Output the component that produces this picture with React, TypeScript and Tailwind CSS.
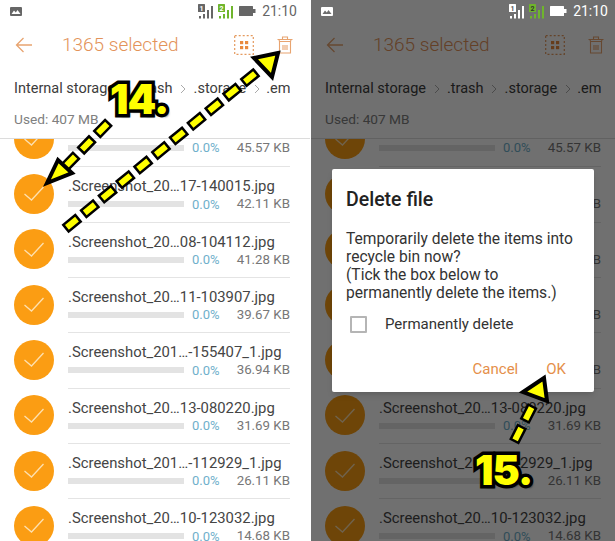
import React from "react";

const rows = [
  { name: ".Screenshot_20…21-150233.jpg", size: "45.57 KB" },
  { name: ".Screenshot_20…17-140015.jpg", size: "42.11 KB" },
  { name: ".Screenshot_20…08-104112.jpg", size: "41.28 KB" },
  { name: ".Screenshot_20…11-103907.jpg", size: "39.67 KB" },
  { name: ".Screenshot_201…-155407_1.jpg", size: "36.94 KB" },
  { name: ".Screenshot_20…13-080220.jpg", size: "31.69 KB" },
  { name: ".Screenshot_201…-112929_1.jpg", size: "26.11 KB" },
  { name: ".Screenshot_20…10-123032.jpg", size: "14.68 KB" },
];

function Signal({ color, num, numColor }: { color: string; num: string; numColor: string }) {
  return (
    <svg width="16" height="15" viewBox="0 0 16 15">
      <rect x="0" y="0" width="7" height="8" rx="0.5" fill={color} />
      <text x="3.5" y="6.8" textAnchor="middle" fontSize="7" fontWeight="700" fontFamily="Roboto, sans-serif" fill={numColor}>{num}</text>
      <rect x="1" y="12" width="2" height="2.5" fill={color} />
      <rect x="5" y="10" width="2" height="4.5" fill={color} />
      <rect x="9" y="6" width="2" height="8.5" fill={color} />
      <rect x="13" y="2" width="2" height="12.5" fill={color} />
    </svg>
  );
}

function StatusBar({ dim }: { dim?: boolean }) {
  const c = dim ? "#ffffff" : "#666666";
  return (
    <div className={`relative z-10 flex h-[22px] items-center pl-[10px] pr-[13px] ${dim ? "text-white" : "text-[#666666]"}`}>
      <svg width="12" height="9" viewBox="0 0 12 9">
        <rect width="12" height="9" rx="1" fill={c} />
        <path d="M1.5 7 L4 3.5 L5.8 5.5 L7.5 3 L10.5 7 Z" fill={dim ? "#6e6e6e" : "#ffffff"} />
      </svg>
      <div className="ml-auto flex items-center">
        <Signal color={c} num="1" numColor={dim ? "#555555" : "#ffffff"} />
        <span className="ml-[4px] flex">
          <Signal color="#6fb52c" num="2" numColor={dim ? "#333333" : "#ffffff"} />
        </span>
        <svg className="ml-[5px]" width="17" height="10" viewBox="0 0 17 10">
          <rect width="14" height="10" rx="0.5" fill={c} />
          <rect x="14" y="3" width="2.5" height="4" fill={c} />
        </svg>
        <span className="ml-[6px] text-[14px] leading-[20px]">21:10</span>
      </div>
    </div>
  );
}

function Toolbar() {
  return (
    <div className="flex h-[46px] items-center pl-[15px] pr-[17px]">
      <svg width="18" height="16" viewBox="0 0 18 16" fill="none" stroke="#e8a470" strokeWidth="1.3">
        <path d="M17 8 H1.5 M8.5 1 L1.5 8 L8.5 15" />
      </svg>
      <span className="ml-[29px] text-[19px] leading-[26px] font-light text-[#e3935a]">1365 selected</span>
      <svg className="ml-auto" width="20" height="20" viewBox="0 0 20 20" fill="none">
        <rect x="0.7" y="0.7" width="18.6" height="18.6" stroke="#e59a5e" strokeWidth="1.2" strokeDasharray="2 2" />
        <rect x="6" y="6" width="3.2" height="3.2" fill="#e98a3e" />
        <rect x="11" y="6" width="3.2" height="3.2" fill="#e98a3e" />
        <rect x="6" y="11" width="3.2" height="3.2" fill="#e98a3e" />
        <rect x="11" y="11" width="3.2" height="3.2" fill="#e98a3e" />
      </svg>
      <svg className="ml-[23px]" width="16" height="18" viewBox="0 0 16 18" fill="none" stroke="#e8a470" strokeWidth="1.1">
        <path d="M0.5 3.5 H15.5 M5.5 3.5 V1 H10.5 V3.5 M2 3.5 L2.5 5.5 V17 H13.5 V5.5 L14 3.5 M2.5 5.5 H13.5" />
        <path d="M6 9 V14 M8 9 V14 M10 9 V14" />
      </svg>
    </div>
  );
}

function Sep() {
  return (
    <svg className="mx-[7.5px] shrink-0" width="6" height="10" viewBox="0 0 6 10" fill="none" stroke="#aaaaaa" strokeWidth="1">
      <path d="M1 1 L5 5 L1 9" />
    </svg>
  );
}

function Crumbs() {
  return (
    <div className="h-[70px] pl-[14px]">
      <div className="flex h-[40px] w-[276px] items-center overflow-hidden pt-[1px] text-[14.5px] whitespace-nowrap text-[#3c3c3c]">
        <span>Internal storage</span>
        <Sep />
        <span>.trash</span>
        <Sep />
        <span>.storage</span>
        <Sep />
        <span className="ml-[-1px]">.empty</span>
      </div>
      <div className="mt-[2px] text-[13.7px] leading-[18px] text-[#808080]">Used: 407 MB</div>
    </div>
  );
}

function Row({ name, size, first }: { name: string; size: string; first?: boolean }) {
  return (
    <div className="flex h-[55.33px] shrink-0 items-center pl-[14px]">
      <div className="flex size-10 shrink-0 items-center justify-center rounded-full bg-[#fb9d13]">
        <svg width="20" height="15" viewBox="0 0 20 15" fill="none" stroke="#fde0b0" strokeWidth="1.3">
          <path d="M0.5 8 L7.5 14 L19.5 1" />
        </svg>
      </div>
      <div className={`ml-[14px] h-full w-[222px] ${first ? "" : "border-t border-[#e4e4e4]"}`}>
        <div className="mt-[9px] text-[14.85px] leading-[20px] whitespace-nowrap text-[#454545]">{name}</div>
        <div className="mt-[-2px] flex h-[20px] items-center">
          <div className="h-[6px] w-[116px] bg-[#e3e3e3]" />
          <span className="ml-[8px] text-[13px] text-[#6fb0cb]">0.0%</span>
          <span className="ml-auto text-[13.3px] text-[#777777]">{size}</span>
        </div>
      </div>
    </div>
  );
}

function Phone({ dim }: { dim?: boolean }) {
  return (
    <div className="flex h-[541px] w-[310px] shrink-0 flex-col bg-white">
      <StatusBar dim={dim} />
      <Toolbar />
      <Crumbs />
      <div className="min-h-0 flex-1 overflow-hidden border-t border-[#dcdcdc]">
        <div className="mt-[-28px] flex flex-col">
          {rows.map((r, i) => (
            <Row key={r.name} name={r.name} size={r.size} first={i === 0} />
          ))}
        </div>
      </div>
    </div>
  );
}

function Dialog() {
  return (
    <div className="absolute top-[169px] left-[21px] z-20 h-[223px] w-[262px] rounded-[2px] bg-white pt-[19px] pl-[14px] shadow-md">
      <div className="text-[19.5px] leading-[24px] font-medium text-[#222222]">Delete file</div>
      <div className="mt-[18px] text-[15.6px] leading-[18px] text-[#333333]">
        Temporarily delete the items into
        <br />
        recycle bin now?
        <br />
        (Tick the box below to
        <br />
        permanently delete the items.)
      </div>
      <div className="mt-[12px] flex items-center pl-[4px]">
        <div className="size-[17px] rounded-[1px] border-2 border-[#b5b5b5]" />
        <span className="ml-[18px] text-[15px] leading-[20px] text-[#333333]">Permanently delete</span>
      </div>
      <div className="mt-[25px] flex justify-end pr-[28px] text-[15px] leading-[20px] text-[#e58f4a]">
        <span>Cancel</span>
        <span className="ml-[28px]">OK</span>
      </div>
    </div>
  );
}

function Dash({ x1, y1, x2, y2 }: { x1: number; y1: number; x2: number; y2: number }) {
  return (
    <>
      <line x1={x1} y1={y1} x2={x2} y2={y2} stroke="#000000" strokeWidth="11" strokeDasharray="18 5" />
      <line x1={x1} y1={y1} x2={x2} y2={y2} stroke="#ffff00" strokeWidth="6" strokeDasharray="13 10" strokeDashoffset="-2.5" />
    </>
  );
}

function Head({ points }: { points: string }) {
  return <polygon points={points} fill="#ffff00" stroke="#000000" strokeWidth="4" strokeLinejoin="miter" />;
}

function Label({ children, className }: { children: string; className: string }) {
  return (
    <div
      className={`absolute z-30 font-[Inter,sans-serif] text-[41px] leading-[41px] font-black tracking-[-1px] text-[#ffff00] [-webkit-text-stroke:7px_#000000] [paint-order:stroke_fill] [text-shadow:3px_3px_2px_#00000088] ${className}`}
    >
      {children}
    </div>
  );
}

export default function App() {
  return (
    <div className="relative flex h-[541px] w-[615px] overflow-hidden bg-white font-[Roboto,sans-serif]">
      <Phone />
      <div className="relative ml-px h-[541px] w-[304px] overflow-hidden">
        <Phone dim />
        <div className="absolute inset-0 bg-black/56" />
        <Dialog />
      </div>
      <svg className="absolute inset-0 z-20" width="615" height="541" viewBox="0 0 615 541">
        <Dash x1={65} y1={229} x2={258} y2={71} />
        <Head points="278,53 254,58 272,77" />
        <Dash x1={109} y1={122} x2={63} y2={169} />
        <Head points="47,183 58,160 72,173" />
        <Dash x1={514} y1={442} x2={534} y2={403} />
        <Head points="544,378 523,392 547,401" />
      </svg>
      <Label className="top-[79px] left-[110px]">14.</Label>
      <Label className="top-[450px] left-[475px]">15.</Label>
    </div>
  );
}
